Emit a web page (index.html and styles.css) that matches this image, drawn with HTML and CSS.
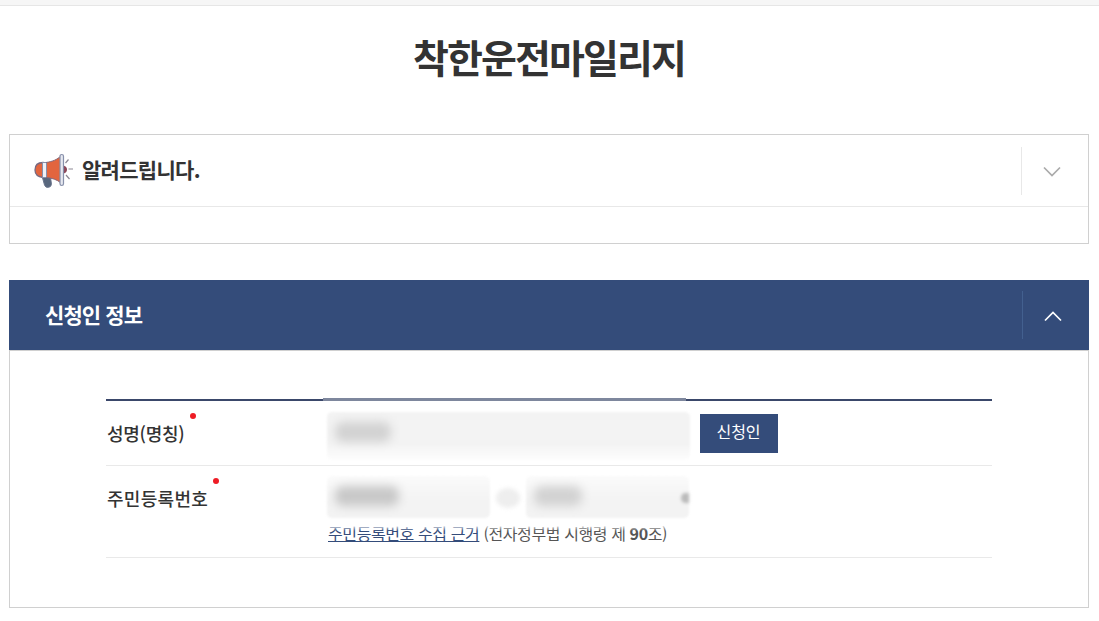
FILE: index.html
```html
<!DOCTYPE html>
<html lang="ko">

<head>
    <meta charset="UTF-8">
    <meta name="viewport" content="width=device-width, initial-scale=1.0">
    <title>착한운전마일리지</title>
    <link rel="stylesheet" href="styles.css">
</head>

<body>
    <div class="top-line"></div>
    <div class="container">
        <h1>착한운전마일리지</h1>

        <!-- 안내 박스 -->
        <div class="notice">
            <div class="notice-head">
                <svg class="megaphone" width="40" height="36" viewBox="0 0 40 36">
                    <path d="M7.500 21 L10.500 32 Q11.500 35 14.500 34.300 Q18 33.500 17.300 30 L16 21 Z" fill="#58677d" stroke="#68738b" />
                    <path d="M9 9.500 Q1 9.500 1 17 Q1 23.500 9 24.500 Z" fill="#e2653e" stroke="#776981" stroke-width="1.300" />
                    <path d="M12 9.500 C19 8.500 23 6.500 27 3 V30 C23 26.500 18 25 12 24.500 Z" fill="#e2653e" />
                    <path d="M8.500 9.500 H12.500 V24.500 H8.500 Z" fill="#f0f0f6" stroke="#8790aa" />
                    <path d="M12 9.500 C19 8.500 23 6.500 27 3 M12 24.500 C18 25 23 26.500 27 30" fill="none" stroke="#86697a" stroke-width="1" />
                    <path d="M29.500 12.500 Q33 13.500 33 16.500 Q33 19.500 29.500 20.500 Z" fill="#8c4658" />
                    <rect x="26" y="1.500" width="3.500" height="31" rx="1.700" fill="#e6e8f0" stroke="#8790aa" stroke-width="1.200" />
                    <path d="M31.500 10 L34.500 6.500 M34.500 16 H39 M32 22 L35.500 26" fill="none" stroke="#8b8793" stroke-width="1.200" />
                </svg>
                <h2>알려드립니다.</h2>
                <button type="button" class="toggle" aria-label="펼치기">
                    <svg width="18" height="12" viewBox="0 0 18 12">
                        <path d="M1 1.500 L9 9.500 L17 1.500" />
                    </svg>
                </button>
            </div>
        </div>

        <!-- 신청인 정보 -->
        <div class="section">
            <div class="section-head">
                <h2>신청인 정보</h2>
                <button type="button" class="toggle" aria-label="접기">
                    <svg width="18" height="12" viewBox="0 0 18 12">
                        <path d="M1 10.500 L9 2.500 L17 10.500" />
                    </svg>
                </button>
            </div>
            <div class="section-body">
                <div class="form">
                    <div class="row row-name">
                        <div class="label">성명(명칭)<span class="required"></span></div>
                        <div class="field">
                            <div class="input input-name"><span class="hidden-value"></span></div>
                            <button type="button" class="btn">신청인</button>
                        </div>
                    </div>
                    <div class="row row-number">
                        <div class="label">주민등록번호<span class="required"></span></div>
                        <div class="field-group">
                            <div class="field">
                                <div class="input input-front"><span class="hidden-value"></span></div>
                                <span class="dash"></span>
                                <div class="input input-back"><span class="hidden-value"></span><span class="edge"></span></div>
                            </div>
                            <p class="basis"><a href="#">주민등록번호 수집 근거</a> (전자정부법 시행령 제 <b>90</b>조)</p>
                        </div>
                    </div>
                </div>
            </div>
        </div>
    </div>
</body>

</html>
```
FILE: styles.css
```css
/* 기본 설정 */
* {
    box-sizing: border-box;
}

body {
    margin: 0;
    background-color: #fff;
    color: #333;
    font-family: "Noto Sans CJK KR", sans-serif;
}

h1,
h2,
p {
    margin: 0;
}

button {
    padding: 0;
    border: none;
    font-family: inherit;
    cursor: pointer;
}

.top-line {
    height: 6px;
    background-color: #f6f6f6;
    border-bottom: 1px solid #e6e6e6;
}

.container {
    width: 1080px;
    margin-left: 9px;
}

h1 {
    height: 128px;
    padding-top: 20px;
    font-size: 39px;
    line-height: 60px;
    letter-spacing: -1.9px;
    text-align: center;
}

/* 안내 박스 */
.notice {
    height: 110px;
    border: 1px solid #d0d0d0;
}

.notice-head {
    display: flex;
    align-items: center;
    height: 72px;
    padding-left: 24px;
    border-bottom: 1px solid #e8e8e8;
}

.notice-head h2 {
    margin-left: 8px;
    padding-bottom: 4px;
    font-size: 21px;
    line-height: 30px;
    letter-spacing: -0.7px;
}

.toggle {
    display: flex;
    align-items: center;
    justify-content: center;
    width: 67px;
    height: 48px;
    margin-left: auto;
    padding: 2px 6px 0 0;
    background: none;
    border-left: 1px solid #e8e8e8;
}

.toggle path {
    fill: none;
    stroke: #aaa;
    stroke-width: 1.7;
}

/* 신청인 정보 */
.section {
    margin-top: 36px;
}

.section-head {
    display: flex;
    align-items: center;
    height: 70px;
    padding-left: 36px;
    background-color: #344c7a;
    color: #fff;
}

.section-head h2 {
    padding-bottom: 3px;
    font-size: 21px;
    line-height: 30px;
    letter-spacing: -0.9px;
}

.section-head .toggle {
    border-left-color: #43608f;
}

.section-head .toggle path {
    stroke: #fff;
}

.section-body {
    height: 258px;
    padding: 48px 96px 0;
    border: 1px solid #d0d0d0;
}

.form {
    position: relative;
    border-top: 2px solid #3a476a;
}

.form::before {
    content: "";
    position: absolute;
    top: -3px;
    left: 217px;
    width: 363px;
    height: 3px;
    background-color: #7e879d;
}

.row {
    display: flex;
    border-bottom: 1px solid #e9e9e9;
}

.row-name {
    height: 65px;
}

.row-number {
    height: 92px;
}

.label {
    width: 221px;
    padding: 12px 0 0 1px;
    font-size: 18px;
    font-weight: 500;
    line-height: 28px;
    letter-spacing: -0.3px;
}

.row-number .label {
    letter-spacing: 0.3px;
}

.required {
    display: inline-block;
    width: 6px;
    height: 6px;
    margin-left: 6px;
    border-radius: 50%;
    background-color: #ee1c25;
    vertical-align: 22px;
}

.row-number .required {
    margin-left: 5px;
}

.field {
    display: flex;
}

/* 가려진 입력값 */
.input {
    position: relative;
    height: 42px;
    border-radius: 5px;
    background-color: #f3f3f3;
    filter: blur(1.2px);
}

.hidden-value {
    display: block;
    width: 56px;
    height: 20px;
    margin: 10px 0 0 8px;
    border-radius: 8px;
    background-color: #d2d2d2;
    filter: blur(5px);
}

.input-name {
    width: 363px;
    height: 48px;
    margin-top: 11px;
    background: linear-gradient(#f3f3f3 65%, #fdfdfd);
}

.input-front,
.input-back {
    width: 163px;
    margin-top: 10px;
    background: linear-gradient(#fbfbfb, #f3f3f3 60%);
}

.input-front .hidden-value {
    width: 64px;
    background-color: #c8c8c8;
}

.input-back .hidden-value {
    width: 48px;
}

.dash {
    width: 24px;
    height: 20px;
    margin: 22px 6px 0;
    border-radius: 50%;
    background-color: #eee;
    filter: blur(2px);
}

.edge {
    position: absolute;
    top: 17px;
    right: 0;
    width: 8px;
    height: 10px;
    border-radius: 50% 0 0 50%;
    background-color: #bbb;
    filter: blur(1px);
}

.btn {
    width: 78px;
    height: 39px;
    margin: 13px 0 0 10px;
    padding: 0 1px 5px 0;
    background-color: #344c7a;
    color: #fff;
    font-size: 16px;
}

.basis {
    position: relative;
    margin: 3px 0 0 1px;
    color: #555;
    font-size: 16px;
    line-height: 24px;
    letter-spacing: -0.4px;
}

.basis::before {
    content: "";
    position: absolute;
    top: 0;
    left: 0;
    width: 340px;
    height: 10px;
    background: linear-gradient(#fff 35%, rgba(255, 255, 255, 0));
}

.basis a {
    color: #344c7a;
}
```
